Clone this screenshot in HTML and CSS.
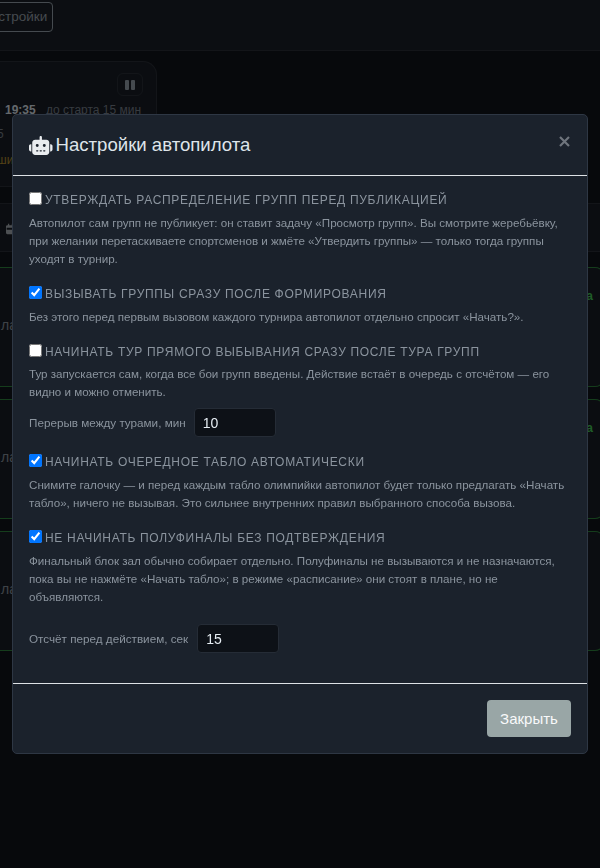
FILE: index.html
```html
<!DOCTYPE html>
<html lang="ru">
<head>
    <meta charset="UTF-8">
    <meta name="viewport" content="width=device-width, initial-scale=1.0">
    <title>Настройки автопилота</title>
    <link rel="stylesheet" href="styles.css">
</head>
<body>
    <!-- page behind the dialog, mostly hidden -->
    <div class="page">
        <div class="topbar"><a class="top-btn">Настройки</a></div>

        <div class="hero-card">
            <div class="pause-row">
                <span class="pause-btn"><i></i><i></i></span>
            </div>
            <p class="hero-time"><b>19:35</b> <span>до старта 15 мин</span></p>
            <p class="hero-num">5</p>
            <p class="hero-warn">ши</p>
        </div>

        <div class="side-row">
            <svg class="side-icon" viewBox="0 0 14 16"><path d="M3 0h2v2h4V0h2v2h1a2 2 0 0 1 2 2v10a2 2 0 0 1-2 2H2a2 2 0 0 1-2-2V4a2 2 0 0 1 2-2h1zM1 6v3h12V6z" fill="#9aa0a6"/></svg>
        </div>

        <div class="hall-card"><span class="hall-left">ла</span><span class="hall-right">а</span></div>
        <div class="hall-card"><span class="hall-left">ла</span><span class="hall-right">а</span></div>
        <div class="hall-card"><span class="hall-left">ла</span></div>
    </div>

    <div class="backdrop"></div>

    <section class="modal">
        <header class="modal-head">
            <h2>
                <svg class="robot" viewBox="0 0 640 512"><path fill="#e9ecef" d="M320 0c17.700 0 32 14.300 32 32V96H472c44.200 0 80 35.800 80 80V432c0 44.200-35.800 80-80 80H168c-44.200 0-80-35.800-80-80V176c0-44.200 35.800-80 80-80H288V32c0-17.700 14.300-32 32-32zM208 384c-8.800 0-16 7.200-16 16s7.200 16 16 16h32c8.800 0 16-7.200 16-16s-7.200-16-16-16H208zm96 0c-8.800 0-16 7.200-16 16s7.200 16 16 16h32c8.800 0 16-7.200 16-16s-7.200-16-16-16H304zm96 0c-8.800 0-16 7.200-16 16s7.200 16 16 16h32c8.800 0 16-7.200 16-16s-7.200-16-16-16H400zM264 256a40 40 0 1 0-80 0 40 40 0 1 0 80 0zm152 40a40 40 0 1 0 0-80 40 40 0 1 0 0 80zM48 224H64V416H48c-26.500 0-48-21.500-48-48V272c0-26.500 21.500-48 48-48zm544 0c26.500 0 48 21.500 48 48v96c0 26.500-21.500 48-48 48H576V224h16z"/></svg>
                Настройки автопилота
            </h2>
            <svg class="close" viewBox="0 0 11 11"><path d="M1 1l9 9M10 1l-9 9" stroke="#6f757d" stroke-width="2.200" fill="none"/></svg>
        </header>

        <div class="modal-body">
            <div class="opt">
                <label><input type="checkbox">Утверждать распределение групп перед публикацией</label>
                <p>Автопилот сам групп не публикует: он ставит задачу «Просмотр групп». Вы смотрите жеребьёвку, при желании перетаскиваете спортсменов и жмёте «Утвердить группы» — только тогда группы уходят в турнир.</p>
            </div>
            <div class="opt">
                <label><input type="checkbox" checked>Вызывать группы сразу после формирования</label>
                <p>Без этого перед первым вызовом каждого турнира автопилот отдельно спросит «Начать?».</p>
            </div>
            <div class="opt opt-tight">
                <label><input type="checkbox">Начинать тур прямого выбывания сразу после тура групп</label>
                <p>Тур запускается сам, когда все бои групп введены. Действие встаёт в очередь с отсчётом — его видно и можно отменить.</p>
            </div>
            <div class="field field-pause">
                <span>Перерыв между турами, мин</span>
                <input type="text" value="10">
            </div>
            <div class="opt">
                <label><input type="checkbox" checked>Начинать очередное табло автоматически</label>
                <p>Снимите галочку — и перед каждым табло олимпийки автопилот будет только предлагать «Начать табло», ничего не вызывая. Это сильнее внутренних правил выбранного способа вызова.</p>
            </div>
            <div class="opt">
                <label><input type="checkbox" checked>Не начинать полуфиналы без подтверждения</label>
                <p>Финальный блок зал обычно собирает отдельно. Полуфиналы не вызываются и не назначаются, пока вы не нажмёте «Начать табло»; в режиме «расписание» они стоят в плане, но не объявляются.</p>
            </div>
            <div class="field field-count">
                <span>Отсчёт перед действием, сек</span>
                <input type="text" value="15">
            </div>
        </div>

        <footer class="modal-foot">
            <button class="close-btn">Закрыть</button>
        </footer>
    </section>
</body>
</html>
```

FILE: styles.css
```css
* {
    box-sizing: border-box;
}

html, body {
    height: 100%;
}

body {
    margin: 0;
    overflow: hidden;
    background-color: #0f1219;
    color: #e6edf3;
    font-family: "Liberation Sans", Arial, sans-serif;
}

/* page behind */
.page {
    height: 868px;
    overflow: hidden;
}

.topbar {
    height: 51px;
    padding: 2px 0 0;
    border-bottom: 1px solid #262b33;
    background-color: #181d24;
}

.top-btn {
    display: block;
    width: 73px;
    height: 30px;
    margin-left: -20px;
    padding-right: 8px;
    border: 1px solid #8b949e;
    border-radius: 4px;
    font-size: 13.500px;
    line-height: 28px;
    text-align: right;
    color: #8b949e;
}

.hero-card {
    width: 157px;
    height: 126px;
    margin-top: 10px;
    padding: 11px 13px 0 0;
    background-color: #171b22;
    border: 1px solid #262b33;
    border-left: none;
    border-radius: 0 14px 0 0;
}

.pause-row {
    display: flex;
    justify-content: flex-end;
}

.pause-btn {
    display: flex;
    justify-content: center;
    align-items: center;
    gap: 2px;
    width: 26px;
    height: 23px;
    border: 1px solid #262b33;
    border-radius: 6px;
}

.pause-btn i {
    width: 4px;
    height: 10px;
    border-radius: 1px;
    background-color: #8b949e;
}

.hero-time {
    margin: 5px 0 0 5px;
    font-size: 12px;
    line-height: 18px;
    white-space: nowrap;
    color: #6e7681;
}

.hero-time b {
    color: #c9d1d9;
    margin-right: 7px;
}

.hero-num {
    margin: 6px 0 0 -3px;
    font-size: 12px;
    line-height: 18px;
    color: #6e7681;
}

.hero-warn {
    margin: 8px 0 0 -3px;
    font-size: 12px;
    line-height: 18px;
    color: #a8842c;
}

.side-row {
    height: 49px;
    margin-top: 16px;
    padding: 17px 0 0 6px;
    background-color: #171b22;
    border-top: 1px solid #262b33;
    border-bottom: 1px solid #262b33;
}

.side-icon {
    display: block;
    width: 9px;
    height: 16px;
}

.hall-card {
    display: flex;
    justify-content: space-between;
    align-items: flex-start;
    width: 625px;
    height: 120px;
    margin: 0 0 12px -20px;
    padding-top: 49px;
    border: 1px solid #262b33;
    border-top-color: #2a7a38;
    border-bottom-color: #2a7a38;
    border-radius: 10px;
    background-color: #171b22;
    font-size: 14px;
    color: #7d858e;
}

.side-row + .hall-card {
    margin-top: 15px;
}

.hall-left {
    padding-left: 20px;
}

.hall-right {
    margin-top: -28px;
    padding-right: 11px;
    font-size: 12px;
    font-weight: 700;
    color: #3fb950;
}

.backdrop {
    position: fixed;
    inset: 0;
    background-color: rgba(0, 0, 0, 0.5);
}

/* dialog */
.modal {
    position: fixed;
    top: 114px;
    left: 12px;
    width: 576px;
    height: 640px;
    display: flex;
    flex-direction: column;
    background-color: #1b222c;
    border: 1px solid #2e3744;
    border-radius: 5px;
}

.modal-head {
    display: flex;
    justify-content: space-between;
    align-items: center;
    flex: none;
    height: 61px;
    padding: 0 17px 0 16px;
    border-bottom: 1px solid #dee2e6;
}

.modal-head h2 {
    display: flex;
    align-items: center;
    gap: 3px;
    margin: 0;
    font-size: 18.600px;
    font-weight: 400;
    color: #dfe5ea;
}

.robot {
    width: 23.500px;
    height: 19px;
}

.close {
    width: 11px;
    height: 11px;
    margin-bottom: 7px;
}

.modal-body {
    flex: 1;
    min-height: 0;
    padding: 16px 16px 0;
}

.opt {
    margin-bottom: 18px;
}

.opt label {
    display: flex;
    align-items: center;
    gap: 3px;
    font-size: 12px;
    line-height: 16px;
    letter-spacing: 0.700px;
    text-transform: uppercase;
    color: #8b949e;
}

.opt input {
    width: 13px;
    height: 13px;
    margin: 0 0 3px;
}

.opt p {
    margin: 6px 0 0;
    font-size: 11.620px;
    line-height: 18px;
    color: #8b949e;
}

.opt-tight {
    margin-bottom: 7px;
}

.opt-tight p {
    margin-top: 5px;
}

.field {
    display: flex;
    align-items: center;
    gap: 8px;
    font-size: 11.700px;
    color: #8b949e;
}

.field-pause {
    margin-bottom: 17px;
}

.field-count {
    margin-top: 11px;
    gap: 9px;
}

.field input {
    width: 82px;
    height: 29px;
    padding: 0 8px;
    border: 1px solid #252c36;
    border-radius: 4px;
    background-color: #0d1117;
    color: #e6edf3;
    font-family: inherit;
    font-size: 14px;
}

.modal-foot {
    display: flex;
    justify-content: flex-end;
    align-items: center;
    flex: none;
    height: 70px;
    padding: 0 16px;
    border-top: 1px solid #dee2e6;
}

.close-btn {
    width: 84px;
    height: 37px;
    border: none;
    border-radius: 4px;
    background-color: #99a6a6;
    color: #f8f9fa;
    font-family: inherit;
    font-size: 15px;
}
```
